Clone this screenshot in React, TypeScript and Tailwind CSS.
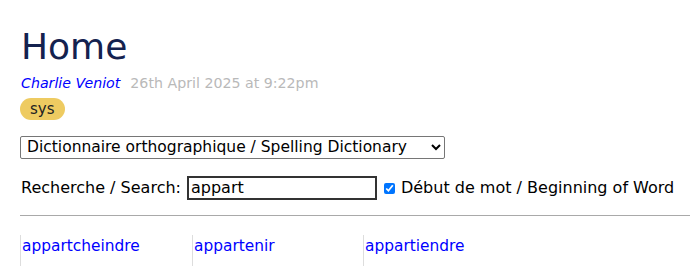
export default function App() {
  const words = ['appartcheindre', 'appartenir', 'appartiendre'];

  return (
    <div className="pl-5 pt-[24px] font-['DejaVu_Sans',sans-serif] text-black bg-white min-h-screen">
      <h1 className="text-[36px] leading-[46px] text-[#14224f] pl-[1px]">Home</h1>
      <div className="flex items-baseline gap-[10px] text-[14.2px] leading-[20px] mt-[3px] pl-[1px]">
        <span className="italic text-[#0000ff]">Charlie Veniot</span>
        <span className="text-[#b9b9b9]">26th April 2025 at 9:22pm</span>
      </div>
      <div className="mt-[4px]">
        <span className="inline-block rounded-full bg-[#eecb61] px-[10px] text-[15px] leading-[22px] text-[#222]">sys</span>
      </div>
      <div className="mt-[14px]">
        <select className="w-[425px] h-[23px] border border-[#767676] rounded-[2px] text-[15.5px] px-[2px]">
          <option>Dictionnaire orthographique / Spelling Dictionary</option>
        </select>
      </div>
      <div className="flex items-center mt-[17px] text-[16px]">
        <span className="pl-[1px]">Recherche / Search:</span>
        <input
          className="ml-[6px] w-[190px] h-[24px] border-2 border-[#333] px-[2px] text-[16px]"
          defaultValue="appart"
        />
        <input type="checkbox" defaultChecked className="ml-[7px] w-[11px] h-[11px] accent-[#0075ff]" />
        <span className="ml-[6px]">Début de mot / Beginning of Word</span>
      </div>
      <hr className="mt-[15px] border-t border-[#a9a9a9]" />
      <div className="grid grid-cols-[172px_171px_172px] mt-[19px] text-[15.4px]">
        {words.map((w) => (
          <div key={w} className="border-l border-[#ddd] pl-[1px] pb-[8px]">
            <a className="text-[#0000ff]">{w}</a>
          </div>
        ))}
      </div>
    </div>
  );
}
